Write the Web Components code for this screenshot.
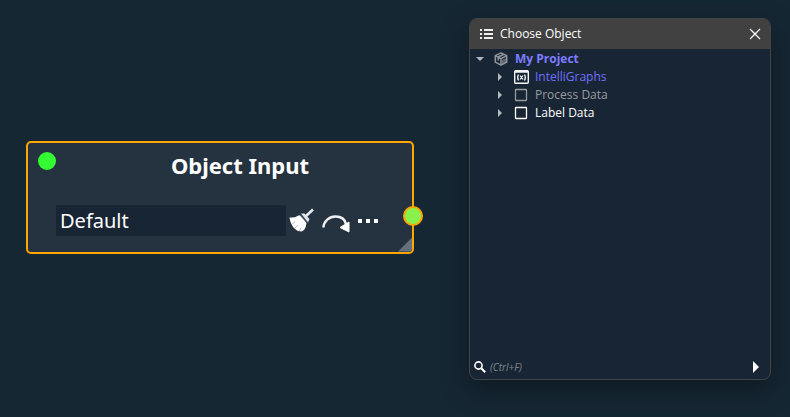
<!DOCTYPE html>
<html lang="en">
<head>
<meta charset="utf-8">
<title>Object Input</title>
<style>
html,body{margin:0;min-height:100%;background:#162734}
body{font-family:"Noto Sans","Open Sans",sans-serif;color:#fff}
</style>
</head>
<body>
<graph-canvas>
  <object-node heading="Object Input" value="Default"></object-node>
  <chooser-dialog heading="Choose Object">
    <tree-item kind="project" open level="0">My Project
      <tree-item slot="children" kind="graphs" level="1">IntelliGraphs</tree-item>
      <tree-item slot="children" kind="muted" level="1">Process Data</tree-item>
      <tree-item slot="children" kind="plain" level="1">Label Data</tree-item>
    </tree-item>
  </chooser-dialog>
</graph-canvas>
<script>
const BUTTON = 'button{appearance:none;border:0;padding:0;margin:0;background:none;color:inherit;font:inherit;display:grid;place-items:center;flex:none}svg{display:block}';

customElements.define('graph-canvas', class extends HTMLElement {
  constructor() {
    super();
    this.attachShadow({mode:'open'}).innerHTML = `
<style>
:host{display:block;min-height:100vh;box-sizing:border-box;padding:18px 19px 37px 26px;background:#162734}
main{display:grid;grid-template-columns:minmax(0,388fr) minmax(0,302fr);gap:55px;align-items:center;min-height:calc(100vh - 55px)}
::slotted(object-node){margin-bottom:4px}
::slotted(chooser-dialog){align-self:stretch}
</style>
<main><slot></slot></main>`;
  }
});

customElements.define('object-node', class extends HTMLElement {
  constructor() {
    super();
    const title = this.getAttribute('heading'), value = this.getAttribute('value');
    this.attachShadow({mode:'open'}).innerHTML = `
<style>${BUTTON}
:host{display:block;position:relative;box-sizing:border-box;border:2px solid #ffa500;border-radius:5px;background:#25323f;padding:8px 28px 15px 28px}
h1{margin:0 0 26px;padding-left:40px;text-align:center;font-size:22px;line-height:28px;font-weight:700}
.row{display:flex;align-items:center}
input{flex:1;min-width:0;height:31px;box-sizing:border-box;border:0;outline:0;padding:0 4px;margin-right:2px;background:#182534;color:#fff;font:20px/30px "Noto Sans",sans-serif}
button{width:32px;height:32px}
.status,.port{position:absolute;border-radius:50%;box-sizing:border-box}
.status{left:10px;top:9px;width:18px;height:18px;background:#33fc33}
.port{right:-11px;top:63px;width:20px;height:20px;border:2px solid #ffa500;background:#88f14b}
.grip{position:absolute;right:0;bottom:0;width:14px;height:14px;background:#66707c;clip-path:polygon(100% 0,100% 100%,0 100%);border-bottom-right-radius:3px}
</style>
<h1>${title}</h1>
<div class="row">
<input aria-label="Object" value="${value}">
<button aria-label="Clear"><svg width="32" height="32" viewBox="0 0 32 32"><path d="M25 4.500L17.500 11.500" stroke="#e8eaec" stroke-width="2.600"/><path d="M13 8.500l3.500 0 5 5.500-1.500 3.500z" fill="#e3e6e9"/><path d="M1.500 12.500q5 .5 8-1.500 1.500-1 3-.5l6 7.500q-.5 2-1 4.500-1 3-4 4-4 0-6.500-2.500-4.500-4-5.500-11.500z" fill="#fff"/><path d="M11.800 9.600l7.800 8" stroke="#4d5964" stroke-width="1.200"/><path d="M4 19l3-2M7 23l3-3M11 26l2-3" stroke="#a7adb3" stroke-width=".8"/></svg></button>
<button aria-label="Go to object"><svg width="32" height="32" viewBox="0 0 32 32"><path d="M3.300 22.500C4 16 9 11.500 15.500 11.500c5.500 0 9.500 3 10.500 7.500" fill="none" stroke="#eef0f1" stroke-width="2.400"/><path d="M20 22.500l9-5.500v10z" fill="#fff" stroke="#fff" stroke-linejoin="round"/></svg></button>
<button aria-label="Choose"><svg width="32" height="32" viewBox="0 0 32 32" fill="#fff"><path d="M6 14h4v4H6zM14 14h4v4h-4zM22 14h4v4h-4z"/></svg></button>
</div>
<span class="status"></span><span class="port"></span><span class="grip"></span>`;
  }
});

const CUBE = '<svg width="14" height="14" viewBox="0 0 14 14" fill="none" stroke="#92969b" stroke-width="1.500" stroke-linejoin="round"><path d="M7 .9l5.700 2.700v6.600L7 13.100l-5.700-2.900V3.600z"/><path d="M1.300 3.600L7 6.600l5.700-3M7 6.600v6.500M9.800 2.300L4.200 5v3.500"/><path d="M8 8l4.500-2.300v4.500L8 12.300z" fill="#92969b" fill-opacity=".6" stroke="none"/></svg>';
const GRAPH = '<svg width="15" height="14" viewBox="0 0 15 14" fill="none" stroke="#f4f5f6"><rect x=".7" y=".7" width="13.600" height="12.600" rx="1" stroke-width="1.400"/><path d="M1 1.500h13" stroke-width="2.500"/><path d="M4.500 4.500q-1.800 3 0 6M10.500 4.500q1.800 3 0 6M6 5.500l3 4M9 5.500l-3 4" stroke-width="1.200"/></svg>';
const BOX = c => `<svg width="14" height="14" viewBox="0 0 14 14"><rect x="1.500" y="1.500" width="11" height="11" rx=".5" fill="none" stroke="${c}" stroke-width="1.300"/></svg>`;
const KINDS = {
  project:['#7c7cff', CUBE, 700], graphs:['#7070ff', GRAPH, 400],
  muted:['#989ca0', BOX('#989ca0'), 400], plain:['#fff', BOX('#fff'), 400]
};

customElements.define('tree-item', class extends HTMLElement {
  constructor() {
    super();
    const [color, icon, weight] = KINDS[this.getAttribute('kind')];
    const open = this.hasAttribute('open');
    const indent = Number(this.getAttribute('level')) * 20;
    this.setAttribute('role', 'treeitem');
    this.attachShadow({mode:'open'}).innerHTML = `
<style>${BUTTON}
:host{display:block}
.row{display:flex;align-items:center;height:18px;padding-left:${indent + 5}px;color:${color};font:${weight} 12px/18px "Open Sans","Noto Sans",sans-serif}
button{width:10px;height:18px;margin-right:8px}
.icon{width:16px;display:grid;place-items:center;margin-right:6px}
.label{white-space:nowrap}
</style>
<div class="row"><button aria-label="${open ? 'Collapse' : 'Expand'}"><svg width="10" height="10" viewBox="0 0 10 10" fill="#b3b8bd"><path d="${open ? 'M1 3h8L5 7z' : 'M3 1v8l4-4z'}"/></svg></button><span class="icon">${icon}</span><span class="label"><slot></slot></span></div>
<slot name="children"></slot>`;
  }
});

customElements.define('chooser-dialog', class extends HTMLElement {
  constructor() {
    super();
    this.attachShadow({mode:'open'}).innerHTML = `
<style>${BUTTON}
:host{display:flex;flex-direction:column;box-sizing:border-box;border:1px solid #424446;border-radius:8px;overflow:hidden;background:#182534;box-shadow:0 9px 24px rgba(8,14,16,.55);font:12px/18px "Open Sans","Noto Sans",sans-serif}
header{display:flex;align-items:center;height:30px;padding:0 5px 0 10px;background:#414141;flex:none}
h2{flex:1;margin:0 0 0 7px;font-size:12px;line-height:18px;font-weight:400}
header button{width:20px;height:20px}
.tree{flex:1;padding-top:1px}
footer{display:flex;align-items:center;height:24px;padding:0 4px;flex:none}
label{display:flex}
input{flex:1;min-width:0;border:0;outline:0;background:none;padding:0;margin-left:4px;color:#fff;font:italic 10px/18px "Open Sans","Noto Sans",sans-serif}
input::placeholder{color:#7f858b;opacity:1}
footer button{width:20px;height:20px}
</style>
<header><svg width="13" height="12" viewBox="0 0 13 12" fill="#f0f0f0"><path d="M0 1h2v2H0zM4 1h9v2H4zM0 5h2v2H0zM4 5h9v2H4zM0 9h2v2H0zM4 9h9v2H4z"/></svg>
<h2>${this.getAttribute('heading')}</h2>
<button aria-label="Close"><svg width="12" height="12" viewBox="0 0 12 12"><path d="M1 1l10 10M11 1L1 11" stroke="#fff" stroke-width="1.200"/></svg></button></header>
<div class="tree" role="tree"><slot></slot></div>
<footer><label for="find" aria-label="Find"><svg width="12" height="12" viewBox="0 0 12 12" fill="none" stroke="#fff"><circle cx="4.500" cy="4.500" r="3.600" stroke-width="1.600"/><path d="M7.200 7.200l4 4" stroke-width="2"/></svg></label>
<input id="find" placeholder="(Ctrl+F)">
<button aria-label="More"><svg width="8" height="12" viewBox="0 0 8 12"><path d="M1 0v12l6-6z" fill="#fff"/></svg></button></footer>`;
  }
});
</script>
</body>
</html>
